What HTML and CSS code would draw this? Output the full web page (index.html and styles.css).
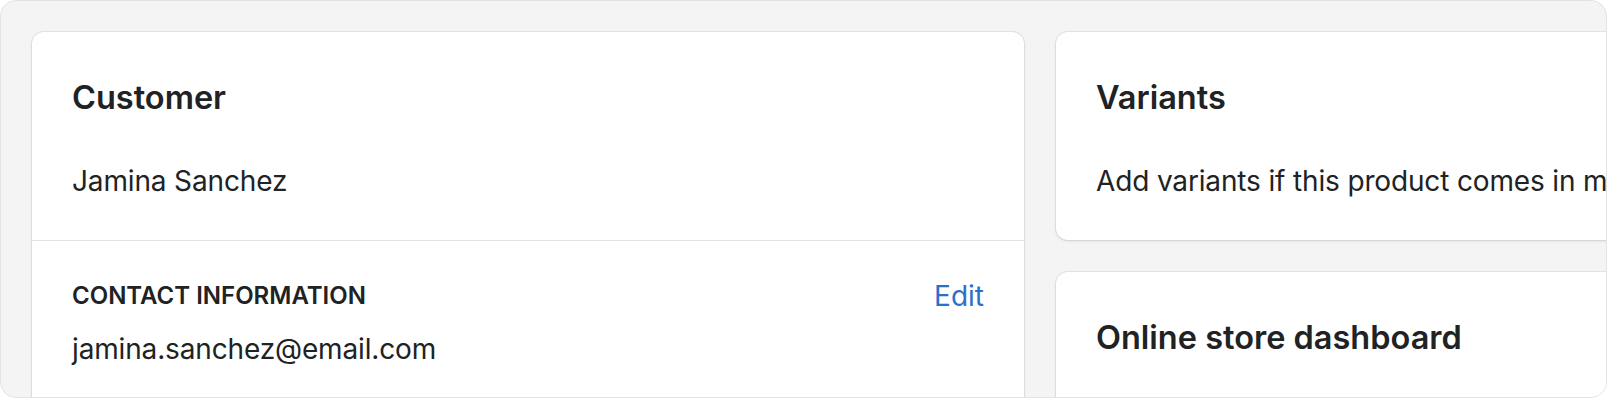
FILE: index.html
```html
<!DOCTYPE html>
<html lang="en">
<head>
<meta charset="utf-8">
<title>Cards</title>
<link rel="stylesheet" href="styles.css">
</head>
<body>
<div class="frame">
  <div class="columns">
    <div class="column">
      <section class="card">
        <div class="card-section">
          <h2 class="card-title">Customer</h2>
          <p class="body-text">Jamina Sanchez</p>
        </div>
        <div class="card-section divided">
          <div class="section-header">
            <h3 class="subheading">Contact information</h3>
            <a class="link" href="#">Edit</a>
          </div>
          <p class="body-text email">jamina.sanchez@email.com</p>
        </div>
      </section>
    </div>
    <div class="column">
      <section class="card">
        <div class="card-section">
          <h2 class="card-title">Variants</h2>
          <p class="body-text">Add variants if this product comes in multiple versions, like different sizes or colors.</p>
        </div>
      </section>
      <section class="card">
        <div class="card-section">
          <h2 class="card-title">Online store dashboard</h2>
          <p class="body-text">View a summary of your online store’s performance.</p>
        </div>
      </section>
    </div>
  </div>
</div>
</body>
</html>
```
FILE: styles.css
```css
* { box-sizing: border-box; }
html, body { margin: 0; padding: 0; background: #ffffff; }
body {
  font-family: Inter, "Noto Sans", "Liberation Sans", sans-serif;
  color: #202223;
}
.frame {
  width: 1607px;
  height: 398px;
  border: 1px solid #e3e3e3;
  border-radius: 16px;
  background: #f4f4f4;
  overflow: hidden;
  padding: 31px;
}
.columns {
  display: grid;
  grid-template-columns: 992px 992px;
  column-gap: 32px;
  align-items: start;
}
.column {
  display: flex;
  flex-direction: column;
  gap: 32px;
}
.card {
  background: #ffffff;
  border-radius: 12px;
  box-shadow: 0 0 0 1px rgba(63, 63, 68, 0.08), 0 1px 3px rgba(63, 63, 68, 0.14);
}
.card-section {
  padding: 40px 40px 39px;
  display: flex;
  flex-direction: column;
}
.card-section.divided {
  border-top: 1px solid #e1e3e5;
}
.card-title {
  margin: 0 0 39px;
  padding-top: 2px;
  font-size: 32.5px;
  line-height: 48px;
  font-weight: 600;
}
.body-text {
  margin: 0;
  font-size: 28px;
  line-height: 40px;
  letter-spacing: -0.15px;
  white-space: nowrap;
}
.section-header {
  display: flex;
  justify-content: space-between;
  align-items: flex-start;
  padding-top: 1px;
}
.subheading {
  margin: 0;
  font-size: 24px;
  line-height: 28px;
  font-weight: 600;
  text-transform: uppercase;
}
.link {
  font-size: 28px;
  line-height: 28px;
  color: #2c6ecb;
  text-decoration: none;
}
.email {
  margin-top: 19px;
}
```
